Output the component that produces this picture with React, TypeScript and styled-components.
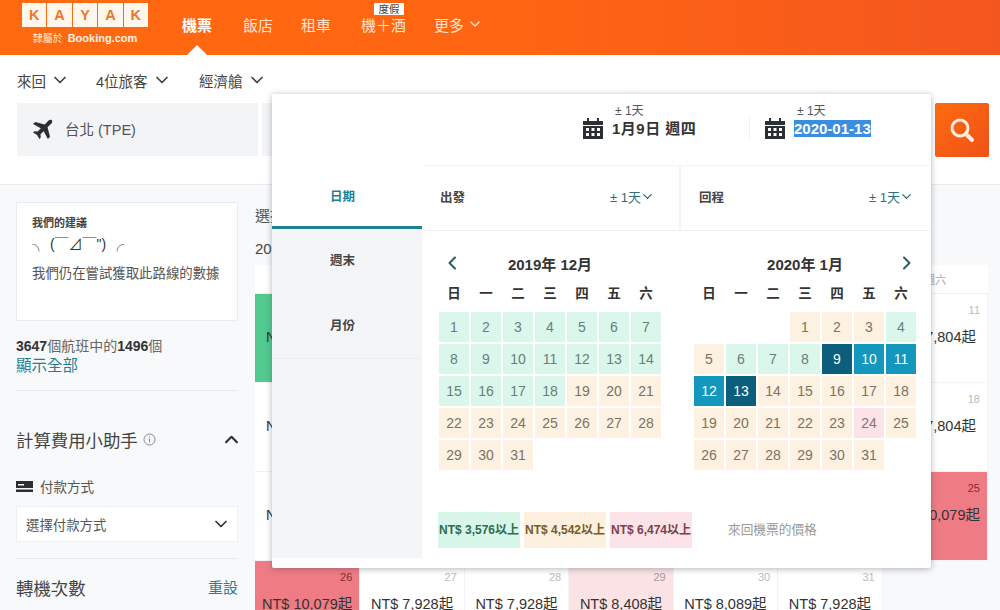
import styled, { createGlobalStyle } from 'styled-components';

const SANS = `"Liberation Sans", "Noto Sans CJK TC", sans-serif`;
const TEAL = '#1f7f93';

const GlobalStyle = createGlobalStyle`
  html, body {
    margin: 0;
    padding: 0;
    background: #fff;
    font-family: ${SANS};
    color: #333;
  }
`;

const Page = styled.div`
  position: relative;
  width: 1000px;
  height: 610px;
  overflow: hidden;
  background: #fff;
`;

/* header */
const Header = styled.header`
  height: 55px;
  display: flex;
  padding-left: 22px;
  background: linear-gradient(90deg, #ff6a10 0%, #ff6512 50%, #f4561f 100%);
`;

const Logo = styled.div`
  width: 126px;
  margin-right: 34px;
  padding-top: 3px;
`;

const Tiles = styled.div`
  display: flex;
  gap: 1px;
`;

const Tile = styled.span`
  flex: 1;
  height: 24px;
  display: flex;
  align-items: center;
  justify-content: center;
  background: #fff6ec;
  color: #e8792c;
  font-size: 14.5px;
  font-weight: 700;
`;

const Affiliate = styled.div`
  display: flex;
  align-items: center;
  justify-content: center;
  gap: 5px;
  margin-top: 3px;
  height: 15px;
  color: #fde6d3;
  font-size: 10px;
  b {
    font-size: 11px;
    color: #fff1e6;
  }
`;

const Nav = styled.nav`
  display: flex;
`;

const NavItem = styled.a<{ $active?: boolean; $width: number }>`
  position: relative;
  width: ${(p) => p.$width}px;
  height: 48px;
  display: flex;
  align-items: center;
  gap: 6px;
  font-size: 15px;
  color: ${(p) => (p.$active ? '#fff' : '#ffe3cf')};
  font-weight: ${(p) => (p.$active ? 700 : 400)};
  ${(p) =>
    p.$active &&
    `
    &::after {
      content: '';
      position: absolute;
      left: 5px;
      bottom: -7px;
      border-left: 10px solid transparent;
      border-right: 10px solid transparent;
      border-bottom: 10px solid #fff;
    }
  `}
`;

const Badge = styled.span`
  position: absolute;
  top: 3px;
  left: 13px;
  width: 30px;
  height: 12px;
  border-radius: 1px;
  background: #fff;
  color: #444;
  font-size: 10.5px;
  line-height: 12px;
  text-align: center;
`;

/* search form */
const OptionRow = styled.div`
  height: 48px;
  display: flex;
  align-items: center;
  padding: 2px 0 0 17px;
  box-sizing: border-box;
`;

const Option = styled.div<{ $width: number }>`
  width: ${(p) => p.$width}px;
  display: flex;
  align-items: center;
  gap: 8px;
  font-size: 14.5px;
  color: #444;
`;

const SearchRow = styled.div`
  height: 82px;
  display: flex;
  gap: 4px;
  padding: 0 11px 0 17px;
  box-sizing: border-box;
  border-bottom: 1px solid #e9ebee;
`;

const Field = styled.div<{ $grow?: boolean }>`
  ${(p) => (p.$grow ? 'flex: 1;' : 'width: 241px;')}
  height: 53px;
  display: flex;
  align-items: center;
  gap: 9px;
  padding: 0 0 3px 15px;
  box-sizing: border-box;
  background: #f2f4f6;
  color: #555;
  font-size: 14.5px;
`;

const SearchButton = styled.div`
  width: 54px;
  height: 54px;
  display: flex;
  align-items: center;
  justify-content: center;
  border-radius: 2px;
  background: linear-gradient(135deg, #ff6a10, #ee5218);
`;

/* below the form */
const Content = styled.div`
  height: 425px;
  display: flex;
  background: #f7f9fb;
`;

const Sidebar = styled.aside`
  width: 222px;
  margin-left: 16px;
  margin-right: 17px;
  padding-top: 17px;
  flex-shrink: 0;
`;

const AdviceCard = styled.div`
  height: 119px;
  padding: 12px 15px;
  box-sizing: border-box;
  background: #fff;
  border: 1px solid #e9ebee;
`;

const AdviceTitle = styled.div`
  font-size: 11px;
  font-weight: 700;
  line-height: 16px;
  color: #444;
`;

const Kaomoji = styled.div`
  font-size: 14px;
  line-height: 22px;
  margin-top: 2px;
  color: #333;
  white-space: nowrap;
`;

const AdviceText = styled.div`
  margin-top: 9px;
  font-size: 13.4px;
  line-height: 20px;
  color: #555;
  white-space: nowrap;
`;

const Count = styled.div`
  margin-top: 16px;
  font-size: 14px;
  line-height: 19px;
  color: #666;
  b {
    color: #333;
  }
`;

const TealLink = styled.a<{ $size: number }>`
  color: ${TEAL};
  font-size: ${(p) => p.$size}px;
  line-height: 19px;
`;

const Divider = styled.hr<{ $top: number }>`
  margin: ${(p) => p.$top}px 0 0;
  border: 0;
  border-top: 1px solid #e9ebee;
`;

const SectionHead = styled.div<{ $top: number }>`
  margin-top: ${(p) => p.$top}px;
  height: 24px;
  display: flex;
  align-items: center;
  justify-content: space-between;
`;

const SectionTitle = styled.span`
  display: flex;
  align-items: center;
  gap: 5px;
  font-size: 17.4px;
  color: #444;
`;

const PaymentLabel = styled.div`
  margin-top: 24px;
  height: 22px;
  display: flex;
  align-items: center;
  gap: 7px;
  font-size: 13.5px;
  color: #555;
`;

const Select = styled.div`
  margin-top: 9px;
  height: 36px;
  display: flex;
  align-items: center;
  justify-content: space-between;
  padding: 0 10px 0 9px;
  background: #fff;
  border: 1px solid #eef0f2;
  box-sizing: border-box;
  font-size: 13.4px;
  color: #555;
`;

const Main = styled.main`
  width: 733px;
  padding-top: 21px;
`;

const MainTitle = styled.div`
  font-size: 15px;
  line-height: 20px;
  color: #555;
`;

const MonthLabel = styled.div`
  margin-top: 13px;
  font-size: 15px;
  line-height: 20px;
  color: #444;
`;

const PriceGrid = styled.div`
  margin-top: 6px;
  display: grid;
  grid-template-columns: repeat(7, 1fr);
  grid-template-rows: 29px repeat(4, 89px);
`;

const WeekHead = styled.div`
  display: flex;
  align-items: center;
  justify-content: center;
  background: #fff;
  border-bottom: 1px solid #eef0f2;
  font-size: 11px;
  color: #aaa;
`;

const tones = {
  none: { bg: '#fff', day: '#bbb' },
  green: { bg: '#52c98f', day: '#2c7a55' },
  red: { bg: '#ef7b85', day: '#7d2f37' },
  pink: { bg: '#fbe3e5', day: '#a99' },
};

type Tone = keyof typeof tones;

const PriceCell = styled.div<{ $tone: Tone }>`
  padding: 9px 7px 0;
  box-sizing: border-box;
  background: ${(p) => tones[p.$tone].bg};
  border-right: 1px solid #f2f3f5;
  border-bottom: 1px solid #f2f3f5;
`;

const CellDay = styled.div<{ $tone: Tone }>`
  text-align: right;
  font-size: 11px;
  line-height: 14px;
  color: ${(p) => tones[p.$tone].day};
`;

const CellPrice = styled.div`
  margin-top: 10px;
  text-align: center;
  font-size: 14.5px;
  line-height: 20px;
  color: #333;
  white-space: nowrap;
`;

/* date picker that lies over the page */
const Popover = styled.div`
  position: absolute;
  left: 272px;
  top: 94px;
  width: 659px;
  height: 474px;
  background: #fff;
  border-radius: 2px;
  box-shadow: 0 1px 6px rgba(60, 70, 80, 0.4);
`;

const PopoverTop = styled.div`
  height: 71px;
  display: grid;
  grid-template-columns: 311px 166px 1fr;
  align-items: center;
  box-sizing: border-box;
  padding-bottom: 16px;
`;

const DateItem = styled.div<{ $column: number }>`
  grid-column: ${(p) => p.$column};
  display: flex;
  align-items: flex-end;
  gap: 9px;
  ${(p) => p.$column === 3 && 'padding-left: 16px;'}
`;

const DateSeparator = styled.span`
  width: 1px;
  height: 22px;
  margin: 0 6px 0 -16px;
  background: #f0f1f3;
`;

const DateText = styled.div`
  display: flex;
  flex-direction: column;
  margin-bottom: 2px;
`;

const Flex = styled.span`
  margin-bottom: 2px;
  padding-left: 3px;
  font-size: 12px;
  line-height: 14px;
  color: #555;
`;

const DateValue = styled.span<{ $selected?: boolean }>`
  align-self: flex-start;
  font-size: 15px;
  font-weight: 700;
  line-height: 17px;
  letter-spacing: ${(p) => (p.$selected ? 0 : 0.5)}px;
  color: ${(p) => (p.$selected ? '#fff' : '#333')};
  background: ${(p) => (p.$selected ? '#3b8de0' : 'transparent')};
`;

const PopoverBody = styled.div`
  height: 393px;
  display: flex;
`;

const Tabs = styled.div`
  width: 150px;
  background: #f3f5f7;
`;

const Tab = styled.div<{ $active?: boolean }>`
  height: ${(p) => (p.$active ? 64 : 65)}px;
  display: flex;
  align-items: center;
  padding-left: 58px;
  padding-bottom: ${(p) => (p.$active ? 0 : 4)}px;
  box-sizing: border-box;
  font-size: 12.5px;
  font-weight: 700;
  color: ${(p) => (p.$active ? TEAL : '#444')};
  background: ${(p) => (p.$active ? '#fff' : 'transparent')};
  border-bottom: ${(p) => (p.$active ? `3px solid ${TEAL}` : '0')};
  &:last-child {
    border-bottom: 1px solid #eceef0;
  }
`;

const Pane = styled.div`
  flex: 1;
`;

const PaneHead = styled.div`
  height: 66px;
  display: flex;
  border-top: 1px solid #f3f4f6;
  border-bottom: 1px solid #f0f1f3;
  box-sizing: border-box;
`;

const PaneHalf = styled.div<{ $first?: boolean }>`
  width: ${(p) => (p.$first ? 259 : 250)}px;
  display: flex;
  align-items: center;
  justify-content: space-between;
  box-sizing: border-box;
  padding: ${(p) => (p.$first ? '0 27px 4px 18px' : '0 20px 4px 18px')};
  font-size: 12.5px;
  font-weight: 700;
  color: #444;
  ${(p) => p.$first && 'border-right: 2px solid #f3f4f6;'}
`;

const FlexPick = styled.span`
  display: flex;
  align-items: center;
  gap: 2px;
  font-weight: 400;
  font-size: 13px;
  color: #2d6f75;
`;

const Months = styled.div`
  display: flex;
  gap: 33px;
  padding: 20px 0 0 17px;
`;

const Month = styled.div`
  width: 222px;
`;

const MonthTitle = styled.div`
  height: 24px;
  display: grid;
  grid-template-columns: 1fr auto 1fr;
  align-items: center;
  font-size: 15px;
  font-weight: 700;
  color: #333;
`;

const Arrow = styled.span<{ $right?: boolean }>`
  display: flex;
  justify-content: ${(p) => (p.$right ? 'flex-end' : 'flex-start')};
  padding: 0 4px 0 8px;
`;

const WeekRow = styled.div`
  margin-top: 7px;
  display: grid;
  grid-template-columns: repeat(7, 30px);
  gap: 2px;
`;

const WeekDay = styled.span`
  height: 24px;
  line-height: 24px;
  text-align: center;
  font-size: 13.5px;
  font-weight: 700;
  color: #333;
`;

const DayGrid = styled.div`
  margin-top: 6px;
  display: grid;
  grid-template-columns: repeat(7, 30px);
  grid-auto-rows: 30px;
  gap: 2px;
`;

const dayTones = {
  g: { bg: '#dbf6eb', fg: '#66807a' },
  o: { bg: '#fdf1e1', fg: '#7d7263' },
  p: { bg: '#fbe3e8', fg: '#857478' },
  d: { bg: '#0b5f7d', fg: '#fff' },
  m: { bg: '#1497bd', fg: '#fff' },
};

type DayTone = keyof typeof dayTones;

const Day = styled.span<{ $tone: DayTone; $start?: number }>`
  display: flex;
  align-items: center;
  justify-content: center;
  background: ${(p) => dayTones[p.$tone].bg};
  color: ${(p) => dayTones[p.$tone].fg};
  font-size: 14px;
  ${(p) => p.$start && `grid-column-start: ${p.$start};`}
`;

const Legend = styled.div`
  margin-top: 42px;
  padding-left: 16px;
  display: flex;
  align-items: center;
  gap: 4px;
`;

const LegendPill = styled.span<{ $bg: string; $fg: string }>`
  width: 82px;
  height: 36px;
  padding-bottom: 3px;
  box-sizing: border-box;
  display: flex;
  align-items: center;
  justify-content: center;
  background: ${(p) => p.$bg};
  color: ${(p) => p.$fg};
  font-size: 12px;
  font-weight: 700;
  white-space: nowrap;
`;

const LegendNote = styled.span`
  margin-left: 32px;
  padding-bottom: 3px;
  font-size: 12.7px;
  color: #999;
`;

const Chevron = ({ size = 12, up = false, color = '#444', width = 1.7 }) => (
  <svg width={size} height={size} viewBox="0 0 12 12" fill="none">
    <path
      d={up ? 'M1 8.500 6 3.500l5 5' : 'M1 3.500 6 8.500l5-5'}
      stroke={color}
      strokeWidth={width}
      strokeLinecap="round"
      strokeLinejoin="round"
    />
  </svg>
);

const MonthArrow = ({ right = false }) => (
  <svg width="10" height="14" viewBox="0 0 10 14" fill="none">
    <path
      d={right ? 'M2 1.500 7.500 7 2 12.500' : 'M8 1.500 2.500 7 8 12.500'}
      stroke="#2c5a66"
      strokeWidth="2"
      strokeLinecap="round"
      strokeLinejoin="round"
    />
  </svg>
);

const CalendarIcon = () => (
  <svg width="20" height="21" viewBox="0 0 20 21">
    <path d="M4 0h2v3h8V0h2v3h4v4H0V3h4z" fill="#2b2f33" />
    <path
      fillRule="evenodd"
      d="M0 8h20v13H0zM3 10v3h3v-3zM8.500 10v3h3v-3zM14 10v3h3v-3zM3 15v3h3v-3zM8.500 15v3h3v-3zM14 15v3h3v-3z"
      fill="#2b2f33"
    />
  </svg>
);

const PlaneIcon = () => (
  <svg width="24" height="24" viewBox="0 0 24 24" fill="#2b2f33">
    <path
      transform="rotate(45 12 12)"
      d="M22.500 17v-3L14 9V3.500C14 2.200 13 1 12 1s-2 1.200-2 2.500V9l-8.500 5v3l8.500-2.500V19l-2.500 2v2l4.500-1.200 4.500 1.200v-2L14 19v-4.500z"
    />
  </svg>
);

const SearchIcon = () => (
  <svg width="26" height="26" viewBox="0 0 26 26" fill="none" stroke="#fdeedd">
    <circle cx="11" cy="11" r="8" strokeWidth="3" />
    <path d="M17 17l6 6" strokeWidth="4" strokeLinecap="round" />
  </svg>
);

const CardIcon = () => (
  <svg width="17" height="11" viewBox="0 0 17 11">
    <path d="M0 0h17v7H0z" fill="#2b2f33" />
    <path d="M0 8.500h17V11H0z" fill="#2b2f33" />
    <path d="M2 3h6v1.500H2z" fill="#fff" />
  </svg>
);

const InfoIcon = () => (
  <svg width="13" height="13" viewBox="0 0 13 13" fill="none" stroke="#888">
    <circle cx="6.500" cy="6.500" r="5.500" />
    <path d="M6.500 5.500v4M6.500 3.200v1" />
  </svg>
);

const WEEK = ['日', '一', '二', '三', '四', '五', '六'];

const decemberTone = (d: number): DayTone => (d <= 18 ? 'g' : 'o');

const januaryTone = (d: number): DayTone => {
  if (d === 9 || d === 13) return 'd';
  if (d >= 10 && d <= 12) return 'm';
  if (d === 4 || (d >= 6 && d <= 8)) return 'g';
  if (d === 24) return 'p';
  return 'o';
};

const range = (n: number) => Array.from(Array(n).keys()).map((i) => i + 1);

// cells under the date picker carry no text, only their colour shows at the edges
const CELLS: { day: number; price?: string; tone: Tone }[] = [
  { day: 5, price: '3,576', tone: 'green' },
  { day: 6, tone: 'green' },
  { day: 7, tone: 'green' },
  { day: 8, tone: 'green' },
  { day: 9, tone: 'none' },
  { day: 10, tone: 'none' },
  { day: 11, price: '7,804', tone: 'none' },
  { day: 12, price: '7,804', tone: 'none' },
  { day: 13, tone: 'none' },
  { day: 14, tone: 'none' },
  { day: 15, tone: 'none' },
  { day: 16, tone: 'none' },
  { day: 17, tone: 'none' },
  { day: 18, price: '7,804', tone: 'none' },
  { day: 19, price: '7,804', tone: 'none' },
  { day: 20, tone: 'none' },
  { day: 21, tone: 'none' },
  { day: 22, tone: 'none' },
  { day: 23, tone: 'none' },
  { day: 24, tone: 'red' },
  { day: 25, price: '10,079', tone: 'red' },
  { day: 26, price: '10,079', tone: 'red' },
  { day: 27, price: '7,928', tone: 'none' },
  { day: 28, price: '7,928', tone: 'none' },
  { day: 29, price: '8,408', tone: 'pink' },
  { day: 30, price: '8,089', tone: 'none' },
  { day: 31, price: '7,928', tone: 'none' },
];

function App() {
  return (
    <Page>
      <GlobalStyle />
      <Header>
        <Logo>
          <Tiles>
            {['K', 'A', 'Y', 'A', 'K'].map((letter, i) => (
              <Tile key={i}>{letter}</Tile>
            ))}
          </Tiles>
          <Affiliate>
            隸屬於 <b>Booking.com</b>
          </Affiliate>
        </Logo>
        <Nav>
          <NavItem $active $width={61}>機票</NavItem>
          <NavItem $width={58}>飯店</NavItem>
          <NavItem $width={60}>租車</NavItem>
          <NavItem $width={73}>
            機＋酒
            <Badge>度假</Badge>
          </NavItem>
          <NavItem $width={60}>
            更多
            <Chevron size={10} color="#ffe3cf" />
          </NavItem>
        </Nav>
      </Header>

      <OptionRow>
        <Option $width={79}>來回 <Chevron /></Option>
        <Option $width={103}>4位旅客 <Chevron /></Option>
        <Option $width={80}>經濟艙 <Chevron /></Option>
      </OptionRow>

      <SearchRow>
        <Field>
          <PlaneIcon />
          台北 (TPE)
        </Field>
        <Field $grow />
        <SearchButton>
          <SearchIcon />
        </SearchButton>
      </SearchRow>

      <Content>
        <Sidebar>
          <AdviceCard>
            <AdviceTitle>我們的建議</AdviceTitle>
            <Kaomoji>╮ (￣⊿￣") ╭</Kaomoji>
            <AdviceText>我們仍在嘗試獲取此路線的數據</AdviceText>
          </AdviceCard>
          <Count>
            <b>3647</b>個航班中的<b>1496</b>個
            <br />
            <TealLink $size={15.5}>顯示全部</TealLink>
          </Count>
          <Divider $top={14} />
          <SectionHead $top={36}>
            <SectionTitle>
              計算費用小助手 <InfoIcon />
            </SectionTitle>
            <Chevron size={13} up color="#333" width={2} />
          </SectionHead>
          <PaymentLabel>
            <CardIcon />
            付款方式
          </PaymentLabel>
          <Select>
            選擇付款方式
            <Chevron size={12} color="#333" />
          </Select>
          <Divider $top={16} />
          <SectionHead $top={16}>
            <SectionTitle>轉機次數</SectionTitle>
            <TealLink $size={15}>重設</TealLink>
          </SectionHead>
        </Sidebar>

        <Main>
          <MainTitle>選擇日期</MainTitle>
          <MonthLabel>2020年1月</MonthLabel>
          <PriceGrid>
            {WEEK.map((w) => (
              <WeekHead key={w}>{w === '六' && '週六'}</WeekHead>
            ))}
            {CELLS.map((cell) => (
              <PriceCell key={cell.day} $tone={cell.tone}>
                {cell.price && (
                  <>
                    <CellDay $tone={cell.tone}>{cell.day}</CellDay>
                    <CellPrice>NT$ {cell.price}起</CellPrice>
                  </>
                )}
              </PriceCell>
            ))}
          </PriceGrid>
        </Main>
      </Content>

      <Popover>
        <PopoverTop>
          <DateItem $column={2}>
            <CalendarIcon />
            <DateText>
              <Flex>± 1天</Flex>
              <DateValue>1月9日 週四</DateValue>
            </DateText>
          </DateItem>
          <DateItem $column={3}>
            <DateSeparator />
            <CalendarIcon />
            <DateText>
              <Flex>± 1天</Flex>
              <DateValue $selected>2020-01-13</DateValue>
            </DateText>
          </DateItem>
        </PopoverTop>
        <PopoverBody>
          <Tabs>
            <Tab $active>日期</Tab>
            <Tab>週末</Tab>
            <Tab>月份</Tab>
          </Tabs>
          <Pane>
            <PaneHead>
              <PaneHalf $first>
                出發
                <FlexPick>± 1天<Chevron size={9} color="#2d6f75" /></FlexPick>
              </PaneHalf>
              <PaneHalf>
                回程
                <FlexPick>± 1天<Chevron size={9} color="#2d6f75" /></FlexPick>
              </PaneHalf>
            </PaneHead>
            <Months>
              <Month>
                <MonthTitle>
                  <Arrow><MonthArrow /></Arrow>
                  2019年 12月
                  <span />
                </MonthTitle>
                <WeekRow>
                  {WEEK.map((w) => <WeekDay key={w}>{w}</WeekDay>)}
                </WeekRow>
                <DayGrid>
                  {range(31).map((d) => (
                    <Day key={d} $tone={decemberTone(d)}>{d}</Day>
                  ))}
                </DayGrid>
              </Month>
              <Month>
                <MonthTitle>
                  <span />
                  2020年 1月
                  <Arrow $right><MonthArrow right /></Arrow>
                </MonthTitle>
                <WeekRow>
                  {WEEK.map((w) => <WeekDay key={w}>{w}</WeekDay>)}
                </WeekRow>
                <DayGrid>
                  {range(31).map((d) => (
                    <Day key={d} $tone={januaryTone(d)} $start={d === 1 ? 4 : undefined}>{d}</Day>
                  ))}
                </DayGrid>
              </Month>
            </Months>
            <Legend>
              <LegendPill $bg="#d9f6ea" $fg="#2c6e50">NT$ 3,576以上</LegendPill>
              <LegendPill $bg="#fdf0df" $fg="#7a5a22">NT$ 4,542以上</LegendPill>
              <LegendPill $bg="#fbe3e8" $fg="#7d3f4a">NT$ 6,474以上</LegendPill>
              <LegendNote>來回機票的價格</LegendNote>
            </Legend>
          </Pane>
        </PopoverBody>
      </Popover>
    </Page>
  );
}

export default App;
